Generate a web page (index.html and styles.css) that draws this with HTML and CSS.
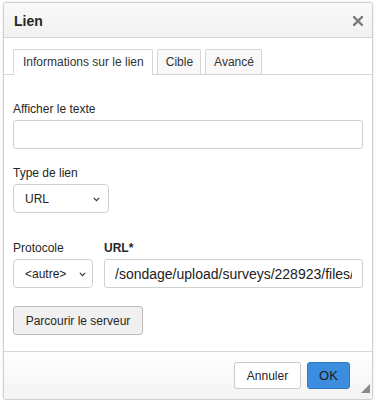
FILE: index.html
```html
<!DOCTYPE html>
<html lang="fr">
<head>
<meta charset="utf-8">
<title>Lien</title>
<link rel="stylesheet" href="styles.css">
</head>
<body>
<div class="dialog">
  <div class="title-bar">
    <span class="title">Lien</span>
    <svg class="close" width="10" height="10" viewBox="0 0 10 10"><path d="M1 1 L9 9 M9 1 L1 9" stroke="#7b7b7b" stroke-width="2.4" stroke-linecap="square" fill="none"/></svg>
  </div>
  <div class="tabs">
    <div class="tab active">Informations sur le lien</div>
    <div class="tab">Cible</div>
    <div class="tab">Avancé</div>
  </div>
  <div class="content">
    <div class="field">
      <label class="label">Afficher le texte</label>
      <input class="input" type="text" value="">
    </div>
    <div class="field field-type">
      <label class="label">Type de lien</label>
      <div class="select select-type">
        <span>URL</span>
        <svg class="chev" width="7" height="5" viewBox="0 0 7 5"><path d="M0.8 0.8 L3.5 3.6 L6.2 0.8" stroke="#333" stroke-width="1.1" fill="none"/></svg>
      </div>
    </div>
    <div class="row">
      <div class="field col-proto">
        <label class="label">Protocole</label>
        <div class="select select-proto">
          <span>&lt;autre&gt;</span>
          <svg class="chev" width="7" height="5" viewBox="0 0 7 5"><path d="M0.8 0.8 L3.5 3.6 L6.2 0.8" stroke="#333" stroke-width="1.1" fill="none"/></svg>
        </div>
      </div>
      <div class="field col-url">
        <label class="label bold">URL*</label>
        <input class="input url" type="text" value="/sondage/upload/surveys/228923/files/">
      </div>
    </div>
    <div class="browse-row">
      <button class="btn browse">Parcourir le serveur</button>
    </div>
  </div>
  <div class="footer">
    <button class="btn cancel">Annuler</button>
    <button class="btn ok">OK</button>
    <svg class="grip" width="9" height="9" viewBox="0 0 9 9"><path d="M9 0 L9 9 L0 9 Z" fill="#8a8a8a"/></svg>
  </div>
</div>
</body>
</html>
```

FILE: styles.css
```css
* { box-sizing: border-box; }

html, body {
  margin: 0;
  padding: 0;
  background: #ffffff;
}

body {
  font-family: "Liberation Sans", Arial, sans-serif;
  font-size: 12px;
  color: #333333;
}

.dialog {
  position: relative;
  margin: 2px 0 0 3px;
  width: 370px;
  height: 398px;
  border: 1px solid #cfcfcf;
  border-radius: 3px;
  background: #ffffff;
  box-shadow: 0 0 3px rgba(0, 0, 0, 0.12);
  display: flex;
  flex-direction: column;
  overflow: hidden;
}

.title-bar {
  height: 35px;
  flex: none;
  display: flex;
  align-items: center;
  justify-content: space-between;
  padding: 0 9px 0 10px;
  background: linear-gradient(#f9f9f9, #f1f1f1);
  border-bottom: 1px solid #d6d6d6;
}

.title {
  font-size: 14px;
  font-weight: bold;
  color: #262626;
  padding-top: 1px;
}

.close {
  display: block;
  margin-top: 1px;
}

.tabs {
  height: 37px;
  flex: none;
  display: flex;
  align-items: flex-end;
  gap: 4px;
  padding-left: 9px;
  border-bottom: 1px solid #d6d6d6;
  background: #ffffff;
}

.tab {
  height: 25px;
  padding: 0 7px 0 8px;
  display: flex;
  align-items: center;
  border: 1px solid #d6d6d6;
  border-bottom: none;
  border-radius: 2px 2px 0 0;
  background: #f8f8f8;
  color: #333333;
  font-size: 12px;
}

.tab.active {
  background: #ffffff;
  height: 26px;
  margin-bottom: -1px;
  padding: 0 8px 1px 9px;
  position: relative;
}

.content {
  flex: 1;
  padding: 27px 9px 0 9px;
  display: flex;
  flex-direction: column;
}

.field {
  display: flex;
  flex-direction: column;
}

.label {
  font-size: 12px;
  line-height: 14px;
  color: #262626;
  margin-bottom: 4px;
}

.label.bold {
  font-weight: bold;
}

.input {
  height: 29px;
  width: 100%;
  border: 1px solid #d1d1d1;
  border-radius: 3px;
  padding: 0 10px;
  font-family: "Liberation Sans", Arial, sans-serif;
  font-size: 14px;
  color: #222222;
  background: #ffffff;
  outline: none;
}

.field-type {
  margin-top: 17px;
}

.select {
  height: 29px;
  border: 1px solid #d1d1d1;
  border-radius: 4px;
  background: #ffffff;
  display: flex;
  align-items: center;
  justify-content: space-between;
  padding: 0 7px 0 11px;
  font-size: 12px;
  color: #222222;
}

.select-type {
  width: 96px;
  padding-right: 8px;
}

.select-proto {
  width: 80px;
  padding-right: 6px;
}

.chev {
  display: block;
  margin-top: 1px;
}

.row {
  margin-top: 28px;
  display: flex;
  gap: 11px;
}

.col-proto {
  flex: none;
  width: 80px;
}

.col-url {
  flex: 1;
  min-width: 0;
}

.browse-row {
  margin-top: 18px;
}

.btn {
  font-family: "Liberation Sans", Arial, sans-serif;
  font-size: 12px;
  color: #262626;
  border-radius: 3px;
  cursor: pointer;
}

.browse {
  height: 29px;
  width: 130px;
  padding: 0;
  border: 1px solid #bcbcbc;
  background: #f0f0f0;
}

.footer {
  position: relative;
  height: 48px;
  flex: none;
  border-top: 1px solid #d6d6d6;
  background: linear-gradient(#ffffff, #f3f3f3);
  display: flex;
  justify-content: flex-end;
  align-items: flex-start;
  gap: 6px;
  padding: 10px 22px 0 0;
}

.cancel {
  height: 27px;
  width: 67px;
  padding: 0;
  border: 1px solid #c9c9c9;
  background: #ffffff;
}

.ok {
  height: 27px;
  width: 43px;
  padding: 0;
  border: 1px solid #2f78c6;
  background: #3c8ddd;
  color: #1b1b1b;
  font-size: 13px;
}

.grip {
  position: absolute;
  right: 2px;
  bottom: 6px;
  display: block;
}
```
